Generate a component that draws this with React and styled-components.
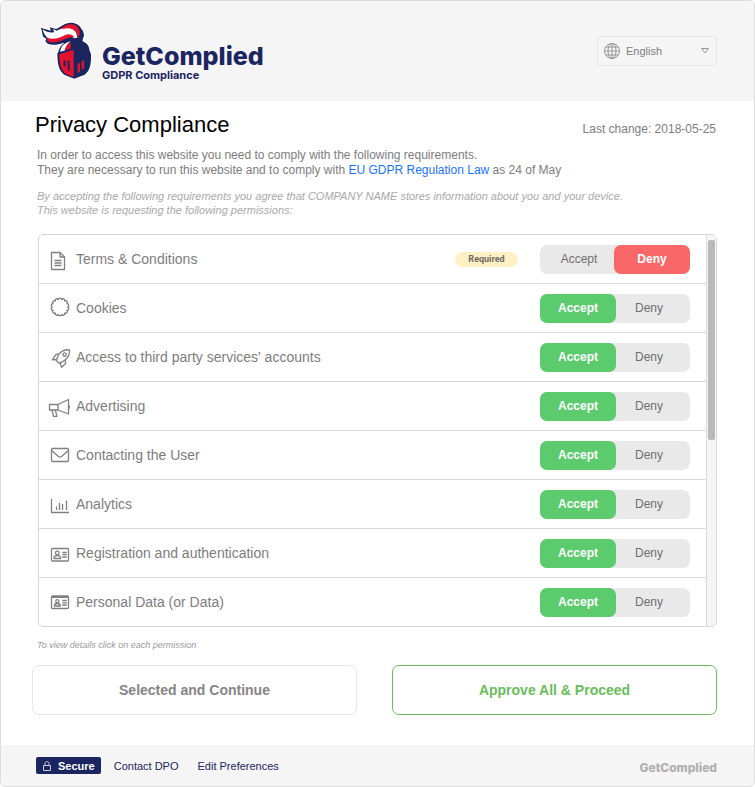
import React, { useState } from "react";
import styled, { createGlobalStyle } from "styled-components";

const GlobalStyle = createGlobalStyle`
  * {
    box-sizing: border-box;
  }
  body {
    margin: 0;
    background: #fff;
    font-family: "Liberation Sans", Arial, sans-serif;
    font-size: 12px;
    color: #7d7d7d;
  }
  button, select {
    font-family: inherit;
  }
`;

const Card = styled.div`
  display: flex;
  flex-direction: column;
  min-height: 100vh;
  border: 1px solid #dedede;
  border-radius: 5px;
  overflow: hidden;
`;

const Header = styled.header`
  display: flex;
  justify-content: space-between;
  align-items: center;
  height: 100px;
  padding: 0 37px 0 39px;
  background: #f5f5f5;
`;

const Brand = styled.div`
  display: flex;
  align-items: center;
  gap: 10px;
`;

const BrandText = styled.div`
  padding-top: 22px;
  color: #1b255f;
  font-family: Inter, sans-serif;
`;

const BrandName = styled.div`
  font-size: 25px;
  line-height: 26px;
  font-weight: 800;
`;

const BrandTagline = styled.div`
  font-size: 11px;
  line-height: 12px;
  font-weight: 700;
`;

const LanguageBox = styled.label`
  display: flex;
  align-items: center;
  width: 120px;
  height: 30px;
  padding: 0 7px 0 5px;
  border: 1px solid #e6e6e6;
  border-radius: 3px;
`;

const LanguageSelect = styled.select`
  flex: 1;
  min-width: 0;
  appearance: none;
  border: none;
  background: transparent;
  padding: 0 0 0 5px;
  font-size: 11px;
  color: #7d7d7d;
`;

const Main = styled.main`
  flex: 1;
  padding: 11px 37px 30px 31px;
`;

const TitleRow = styled.div`
  display: flex;
  justify-content: space-between;
  align-items: center;
  padding: 0 1px 0 3px;
`;

const Title = styled.h1`
  margin: 0;
  font-size: 22px;
  line-height: 26px;
  font-weight: 400;
  color: #000;
`;

const LastChange = styled.span`
  padding-top: 8px;
  line-height: 14px;
`;

const Intro = styled.p`
  margin: 10px 0 0 5px;
  line-height: 15px;
`;

const LawLink = styled.a`
  color: #1a73ff;
  text-decoration: none;
`;

const Notice = styled.p`
  margin: 11px 0 0 5px;
  font-size: 11px;
  line-height: 14px;
  font-style: italic;
  color: #a9a9a9;
`;

const Panel = styled.div`
  display: flex;
  margin: 17px 0 0 6px;
  border: 1px solid #d9d9d9;
  border-radius: 5px;
  overflow: hidden;
`;

const List = styled.ul`
  flex: 1;
  margin: 0;
  padding: 0;
  list-style: none;
`;

const Row = styled.li`
  display: flex;
  align-items: center;
  height: 49px;
  padding: 0 16px 0 11px;
  border-bottom: 1px solid #d9d9d9;

  &:last-child {
    height: 48px;
    border-bottom: none;
  }
`;

const RowIcon = styled.svg`
  flex: none;
  width: 20px;
  height: 20px;
  overflow: visible;
  fill: none;
  stroke: #808080;
  stroke-width: 1.3;
  stroke-linejoin: round;
`;

const RowLabel = styled.span`
  flex: 1;
  padding-left: 6px;
  font-size: 14px;
`;

const Required = styled.span`
  width: 63px;
  margin-right: 22px;
  border-radius: 8px;
  background: #fff0c6;
  font-family: Roboto, sans-serif;
  font-size: 9px;
  line-height: 15px;
  font-weight: 700;
  text-align: center;
  color: #6f6a60;
`;

const Toggle = styled.div`
  display: flex;
  width: 150px;
  height: 29px;
  border-radius: 7px;
  background: #e9e9e9;
`;

const ToggleButton = styled.button`
  width: ${({ $active }) => ($active ? 76 : 74)}px;
  padding: ${({ $active, $side }) =>
    $active ? "0" : $side === "left" ? "0 0 0 4px" : "0 8px 0 0"};
  border: none;
  border-radius: 7px;
  background: ${({ $active, $color }) => ($active ? $color : "transparent")};
  color: ${({ $active }) => ($active ? "#fff" : "#6f6f6f")};
  font-size: 12px;
  font-weight: ${({ $active }) => ($active ? 700 : 400)};
  cursor: pointer;
`;

const ScrollTrack = styled.div`
  width: 10px;
  padding: 5px 1px;
  border-left: 1px solid #d9d9d9;
  background: #f5f5f5;
`;

const ScrollThumb = styled.div`
  height: 200px;
  border-radius: 2px;
  background: #b9b9b9;
`;

const Hint = styled.p`
  margin: 12px 0 0 5px;
  font-size: 9px;
  line-height: 12px;
  font-style: italic;
  color: #9a9a9a;
`;

const Actions = styled.div`
  display: flex;
  gap: 35px;
  margin-top: 14px;
`;

const ActionButton = styled.button`
  flex: 1;
  height: 50px;
  border: 1px solid ${({ $primary }) => ($primary ? "#6abd5c" : "#e6e6e6")};
  border-radius: 7px;
  background: #fff;
  color: ${({ $primary }) => ($primary ? "#6abd5c" : "#858585")};
  font-size: 14px;
  font-weight: 700;
  cursor: pointer;
`;

const Footer = styled.footer`
  display: flex;
  align-items: center;
  height: 41px;
  padding: 0 37px 0 35px;
  background: #f5f5f5;
`;

const Secure = styled.span`
  display: flex;
  align-items: center;
  gap: 7px;
  height: 17px;
  margin-right: 13px;
  padding: 0 6px 0 7px;
  border-radius: 2px;
  background: #1b255f;
  color: #fff;
  font-size: 11px;
  font-weight: 700;
`;

const FooterLink = styled.a`
  margin-right: 19px;
  font-size: 11px;
  color: #1b255f;
  text-decoration: none;
`;

const FooterBrand = styled.span`
  margin-left: auto;
  padding-top: 4px;
  font-family: Inter, sans-serif;
  font-size: 12px;
  font-weight: 800;
  color: #b0b0b0;
`;

const KnightLogo = () => (
  <svg width="52" height="58" viewBox="30 21 156 174">
    <g stroke="#fff" strokeWidth="7" strokeLinejoin="round">
      <path d="M32 38L60 47L60 37L78 42C92 36 104 22 126 23C142 25 152 34 154 42C164 52 163 66 156 75C170 82 178 92 178 104L183 118C184 148 180 168 164 179L133 191L104 180C86 168 82 145 82 114L88 109C88 98 92 92 99 85C78 92 52 92 47 78L49 71L40 66C36 58 38 50 32 38Z" />
    </g>
    <path
      fill="#1b255f"
      d="M32 38L62 47L60 37L78 42C92 36 104 22 126 23C142 25 152 34 154 42C164 52 164 66 156 75L150 82L128 84C120 76 108 80 99 84C78 92 52 92 46 78L49 71L40 66C36 58 38 50 32 38Z"
    />
    <path
      fill="#fff"
      d="M38 43C52 52 62 55 73 51L68 42L80 47C94 42 102 34 114 32C128 32 140 46 142 68L132 70C122 62 110 66 98 72C80 80 60 76 50 66C44 60 40 52 38 43Z"
    />
    <path
      fill="#e4122f"
      d="M88 43C100 37 108 27 124 28C144 29 150 46 149 58L144 73C144 56 136 45 122 41C110 38 98 42 88 43Z"
    />
    <path
      fill="#e4122f"
      d="M51 69C70 75 90 69 104 61C114 56 126 57 134 68C120 65 110 70 98 76C80 84 60 84 52 78Z"
    />
    <path fill="#1b255f" d="M84 114C88 94 99 80 128 74L158 72L154 106Z" />
    <path fill="#fff" d="M91 111C91 96 101 84 122 79C110 90 106 98 107 106Z" />
    <path fill="#e4122f" d="M104 106C106 97 112 87 122 82L122 102Z" />
    <path
      fill="#1b255f"
      d="M82 114L122 101C127 88 137 78 152 77C167 80 178 91 178 104L183 118C184 148 180 168 164 179L133 191L104 180C86 168 82 145 82 114Z"
    />
    <path fill="#e4122f" d="M88 118L131 104V186L108 177C92 166 88 146 88 118Z" />
    <path fill="#1b255f" d="M101 135L107 137V156L101 150ZM113 138L119 136V169L113 164Z" />
    <path fill="#e4122f" d="M143 146L150 143V170L143 174ZM155 139L162 136V160L155 165Z" />
  </svg>
);

const GlobeIcon = () => (
  <svg width="18" height="18" viewBox="0 0 18 18" fill="none" stroke="#969696">
    <circle cx="9" cy="9" r="7.5" />
    <ellipse cx="9" cy="9" rx="4" ry="7.5" />
    <path d="M9 1.5V16.5M1.5 9H16.5M3 5H15M3 13H15" />
  </svg>
);

const ArrowIcon = () => (
  <svg width="8" height="6" viewBox="0 0 8 6" fill="none" stroke="#969696">
    <path d="M.5 .5H7.5L4 5Z" />
  </svg>
);

const LockIcon = () => (
  <svg width="8" height="10" viewBox="0 0 8 10" fill="none" stroke="#c9cce0">
    <path d="M.5 4.5H7.5V9.5H.5ZM2 4.5V2.5C2 0 6 0 6 2.5V4.5" />
  </svg>
);

// wavy outline made of small outward arcs around a circle
const scallop = (cx, cy, r, count) => {
  const points = Array.from({ length: count }, (_, i) => {
    const angle = (i / count) * Math.PI * 2;
    return [cx + r * Math.cos(angle), cy + r * Math.sin(angle)];
  });
  const arcs = [...points.slice(1), points[0]]
    .map(([x, y]) => `A1.7 1.7 0 0 1 ${x} ${y}`)
    .join("");
  return `M${points[0].join(" ")}${arcs}Z`;
};

const icons = {
  terms: (
    <>
      <path d="M1.5 3.5H10L14.5 8V20.5H1.5Z" />
      <path d="M10 3.5V8H14.5M4.5 11.5H11.5M4.5 14H11.5M4.5 16.5H11.5" />
    </>
  ),
  cookies: <path d={scallop(10, 9, 7.6, 14)} />,
  rocket: (
    <>
      <path d="M19.5 2.8C14 2.3 10.5 4.5 8.3 8L6.3 13.5L9 16.3L14.3 13.6C18 11 20 8 19.5 2.8Z" />
      <circle cx="14.6" cy="7.6" r="1.7" />
      <path d="M9 6.8L6 7.3L2.3 12.8L6.5 12.5M15 13L15.8 16.5L11.5 20.3L10.3 16" />
    </>
  ),
  megaphone: (
    <>
      <path d="M-.5 8.5H8L18.5 3.5V18L8 14H-.5ZM8 8.5V14M2 14L3.5 20.3H7L5.3 14" />
      <path d="M19.2 9.5V12.5" />
    </>
  ),
  mail: (
    <>
      <rect x="1.5" y="3.5" width="17" height="13" rx="1" />
      <path d="M1.5 5.5L8.5 11.5C9.5 12.3 10.5 12.3 11.5 11.5L18.5 5.5" />
    </>
  ),
  analytics: (
    <path d="M1.5 5V18.5H19M6.5 12.5V16M9.5 9V16M12.5 10V16M16.5 6.5V16" />
  ),
  registration: (
    <>
      <rect x="1.5" y="5.5" width="17" height="12.5" rx="1" />
      <circle cx="7.3" cy="10" r="1.8" />
      <path d="M4 15.5C4 13 5.5 12.5 7.3 12.5S10.7 13 10.7 15.5ZM12.3 9.5H16.8M12.3 11.7H16.8M12.3 14H16.8" />
    </>
  ),
  personal: (
    <>
      <rect x="1.5" y="4" width="17" height="12.5" rx="1" />
      <path d="M1.5 5H18.5" strokeWidth="2" />
      <circle cx="7.3" cy="9.2" r="1.6" />
      <path d="M4.3 14C4.3 12 5.5 11.5 7.3 11.5S10.3 12 10.3 14ZM12.3 8.5H16.8M12.3 10.8H16.8M12.3 13H16.8" />
    </>
  ),
};

const permissions = [
  { icon: "terms", label: "Terms & Conditions", required: true },
  { icon: "cookies", label: "Cookies" },
  { icon: "rocket", label: "Access to third party services' accounts" },
  { icon: "megaphone", label: "Advertising" },
  { icon: "mail", label: "Contacting the User" },
  { icon: "analytics", label: "Analytics" },
  { icon: "registration", label: "Registration and authentication" },
  { icon: "personal", label: "Personal Data (or Data)" },
];

const PermissionRow = ({ icon, label, required }) => {
  const [accepted, setAccepted] = useState(!required);

  return (
    <Row>
      <RowIcon viewBox="0 0 20 20">{icons[icon]}</RowIcon>
      <RowLabel>{label}</RowLabel>
      {required && <Required>Required</Required>}
      <Toggle role="group" aria-label={label}>
        <ToggleButton
          type="button"
          $side="left"
          $active={accepted}
          $color="#5bcb6e"
          aria-pressed={accepted}
          onClick={() => setAccepted(true)}
        >
          Accept
        </ToggleButton>
        <ToggleButton
          type="button"
          $side="right"
          $active={!accepted}
          $color="#f96767"
          aria-pressed={!accepted}
          onClick={() => setAccepted(false)}
        >
          Deny
        </ToggleButton>
      </Toggle>
    </Row>
  );
};

const App = () => {
  return (
    <>
      <GlobalStyle />
      <Card>
        <Header>
          <Brand>
            <KnightLogo />
            <BrandText>
              <BrandName>GetComplied</BrandName>
              <BrandTagline>GDPR Compliance</BrandTagline>
            </BrandText>
          </Brand>
          <LanguageBox>
            <GlobeIcon />
            <LanguageSelect aria-label="Language">
              <option>English</option>
            </LanguageSelect>
            <ArrowIcon />
          </LanguageBox>
        </Header>
        <Main>
          <TitleRow>
            <Title>Privacy Compliance</Title>
            <LastChange>Last change: 2018-05-25</LastChange>
          </TitleRow>
          <Intro>
            In order to access this website you need to comply with the
            following requirements.
            <br />
            They are necessary to run this website and to comply with{" "}
            <LawLink href="#law">EU GDPR Regulation Law</LawLink> as 24 of May
          </Intro>
          <Notice>
            By accepting the following requirements you agree that COMPANY NAME
            stores information about you and your device.
            <br />
            This website is requesting the following permissions:
          </Notice>
          <Panel>
            <List>
              {permissions.map((item) => (
                <PermissionRow key={item.icon} {...item} />
              ))}
            </List>
            <ScrollTrack>
              <ScrollThumb />
            </ScrollTrack>
          </Panel>
          <Hint>To view details click on each permission</Hint>
          <Actions>
            <ActionButton type="button">Selected and Continue</ActionButton>
            <ActionButton type="button" $primary>
              Approve All &amp; Proceed
            </ActionButton>
          </Actions>
        </Main>
        <Footer>
          <Secure>
            <LockIcon />
            Secure
          </Secure>
          <FooterLink href="#contact">Contact DPO</FooterLink>
          <FooterLink href="#preferences">Edit Preferences</FooterLink>
          <FooterBrand>GetComplied</FooterBrand>
        </Footer>
      </Card>
    </>
  );
};

export default App;
